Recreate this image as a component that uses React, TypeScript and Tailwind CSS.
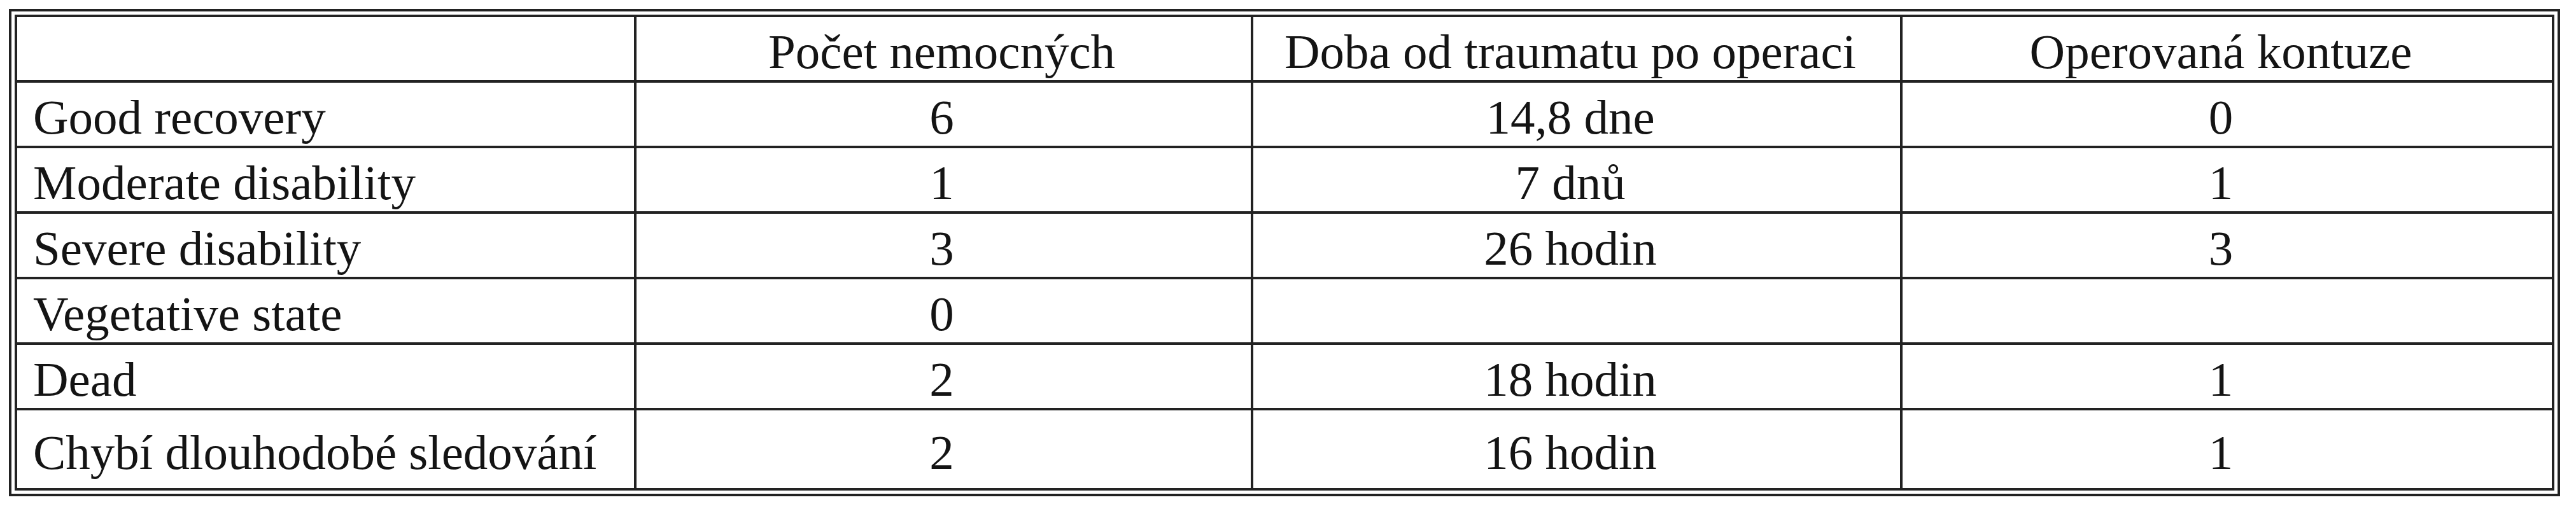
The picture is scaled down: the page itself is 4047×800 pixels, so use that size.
import React from "react";

const rows: [string, string, string, string][] = [
  ["Good recovery", "6", "14,8 dne", "0"],
  ["Moderate disability", "1", "7 dnů", "1"],
  ["Severe disability", "3", "26 hodin", "3"],
  ["Vegetative state", "0", "", ""],
  ["Dead", "2", "18 hodin", "1"],
  ["Chybí dlouhodobé sledování", "2", "16 hodin", "1"],
];

const header = ["", "Počet nemocných", "Doba od traumatu po operaci", "Operovaná kontuze"];

function Cell({ text, col }: { text: string; col: number }) {
  if (col === 0) {
    return (
      <div className="bg-white flex items-center pl-[25px] pt-[10px] whitespace-nowrap">
        {text}
      </div>
    );
  }
  const pad = col === 1 ? "pr-[6px]" : "pr-[20px]";
  return (
    <div className={`bg-white flex items-center justify-center pt-[10px] whitespace-nowrap ${pad}`}>
      {text}
    </div>
  );
}

export default function App() {
  const all = [header, ...rows];
  return (
    <div className="w-[4047px] h-[800px] bg-white pl-[14px] pt-[14px]">
      <div className="w-[4008px] border-4 border-[#222] p-[5px] bg-white">
        <div
          className="border-4 border-[#222] bg-[#222] grid grid-cols-[969px_965px_1016px_1020px] grid-rows-[99px_99px_99px_99px_99px_99px_122px] gap-[4px] text-[77px] leading-none text-[#141414]"
          style={{ fontFamily: '"Liberation Serif", "Times New Roman", serif' }}
        >
          {all.map((r, ri) =>
            r.map((t, ci) => <Cell key={`${ri}-${ci}`} text={t} col={ci} />)
          )}
        </div>
      </div>
    </div>
  );
}
